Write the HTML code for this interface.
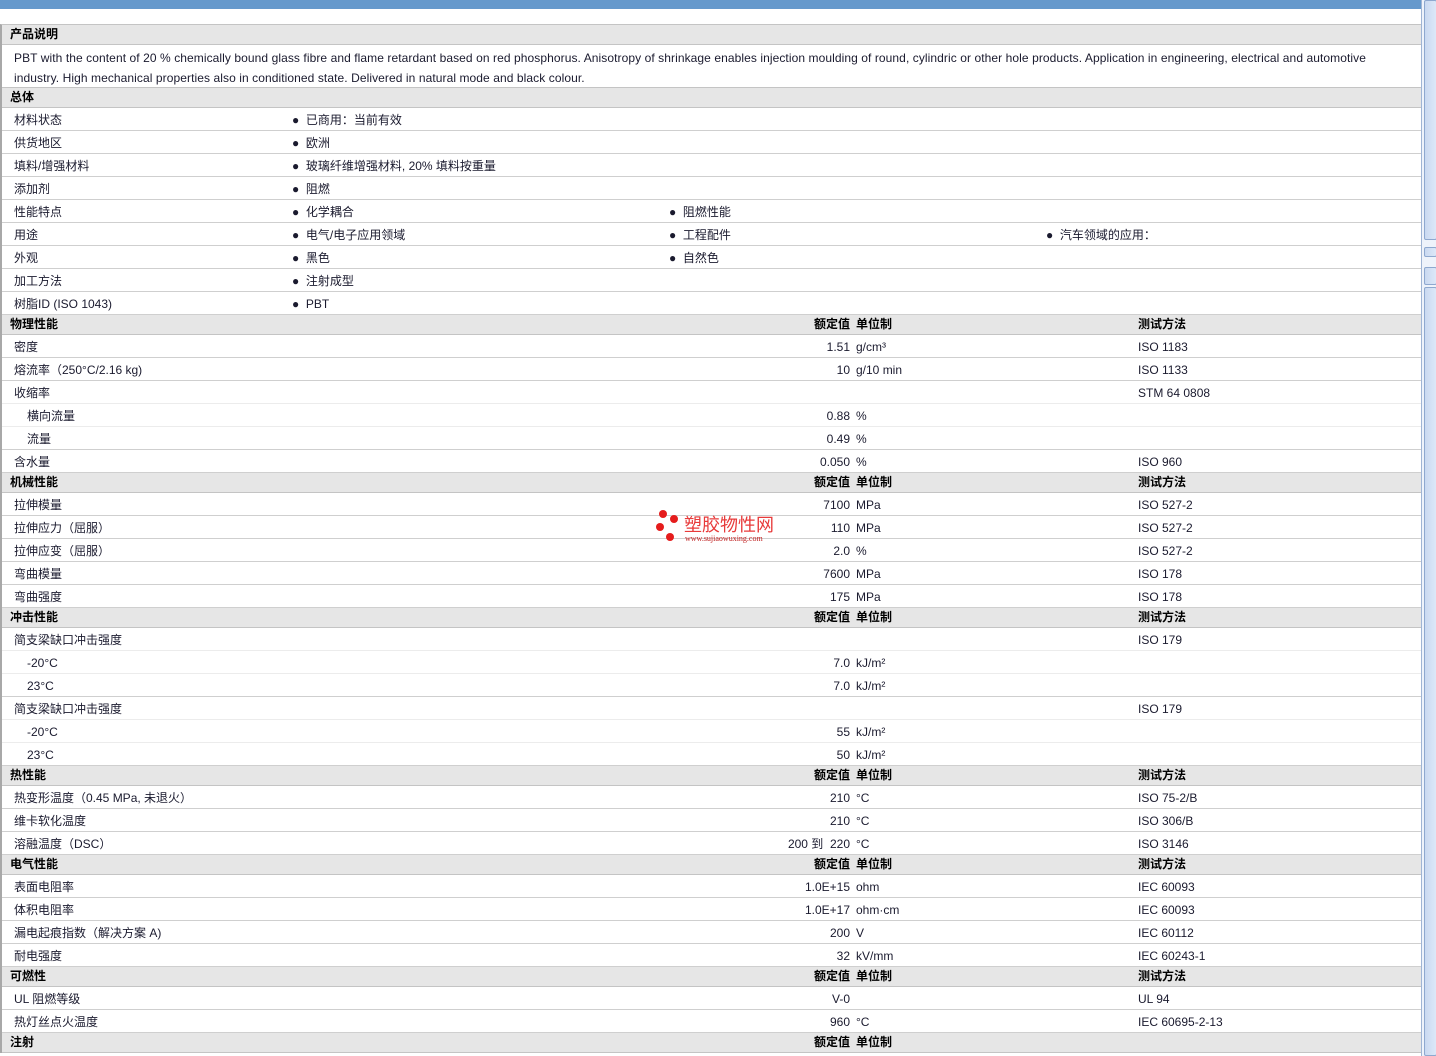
<!DOCTYPE html>
<html><head><meta charset="utf-8"><style>
*{margin:0;padding:0;box-sizing:border-box}
body{width:1436px;height:1056px;overflow:hidden;background:#fff;font-family:"Liberation Sans","Noto Sans CJK SC",sans-serif;font-size:12px;color:#1a1a2e;position:relative}
#top{position:absolute;left:0;top:0;width:1421px;height:9px;background:#6699cc}
#main{position:absolute;left:0;top:24px;width:1421px;border-left:2px solid #a8a8a8;border-top:1px solid #c4c4c4}
.h{height:20px;background:#e6e6e6;border-bottom:1px solid #c4c4c4;position:relative;font-weight:bold;color:#000;line-height:19px}
.h span{position:absolute;top:0}
.r{height:23px;border-bottom:1px solid #cfcfcf;position:relative;line-height:22px}
.r.s{border-bottom-color:#ececec}
.r span{position:absolute;top:1px;white-space:nowrap}
.l{left:12px}.l2{left:25px}
.v{right:571px;text-align:right}
.u{left:854px}.t{left:1136px}
.b1{left:290px}.b2{left:667px}.b3{left:1044px}
.hv{right:571px}.hu{left:854px}.ht{left:1136px}.hl{left:8px}
.desc{height:43px;padding:3px 12px 0;line-height:20px;color:#1a1a2e;position:relative;border-bottom:1px solid #c4c4c4;letter-spacing:0.08px;white-space:nowrap}
#sb{position:absolute;left:1421px;top:0;width:15px;height:1056px;background:#eef3fb;border-left:1px solid #9fb4d4}
.th{position:absolute;left:2px;width:13px;background:linear-gradient(90deg,#c9d9f1,#dde8f8);border:1px solid #8ea8cf;border-radius:2px}
</style></head><body>
<div id="top"></div>
<div id="main">
<div class="h"><span class="hl">产品说明</span></div>
<div class="desc">PBT with the content of 20 % chemically bound glass fibre and flame retardant based on red phosphorus. Anisotropy of shrinkage enables injection moulding of round, cylindric or other hole products. Application in engineering, electrical and automotive<br>industry. High mechanical properties also in conditioned state. Delivered in natural mode and black colour.</div>
<div class="h"><span class="hl">总体</span></div>
<div class="r"><span class="l">材料状态</span><span class="b1">●&nbsp;&nbsp;已商用：当前有效</span></div>
<div class="r"><span class="l">供货地区</span><span class="b1">●&nbsp;&nbsp;欧洲</span></div>
<div class="r"><span class="l">填料/增强材料</span><span class="b1">●&nbsp;&nbsp;玻璃纤维增强材料, 20% 填料按重量</span></div>
<div class="r"><span class="l">添加剂</span><span class="b1">●&nbsp;&nbsp;阻燃</span></div>
<div class="r"><span class="l">性能特点</span><span class="b1">●&nbsp;&nbsp;化学耦合</span><span class="b2">●&nbsp;&nbsp;阻燃性能</span></div>
<div class="r"><span class="l">用途</span><span class="b1">●&nbsp;&nbsp;电气/电子应用领域</span><span class="b2">●&nbsp;&nbsp;工程配件</span><span class="b3">●&nbsp;&nbsp;汽车领域的应用：</span></div>
<div class="r"><span class="l">外观</span><span class="b1">●&nbsp;&nbsp;黑色</span><span class="b2">●&nbsp;&nbsp;自然色</span></div>
<div class="r"><span class="l">加工方法</span><span class="b1">●&nbsp;&nbsp;注射成型</span></div>
<div class="r"><span class="l">树脂ID (ISO 1043)</span><span class="b1">●&nbsp;&nbsp;PBT</span></div>
<div class="h"><span class="hl">物理性能</span><span class="hv">额定值</span><span class="hu">单位制</span><span class="ht">测试方法</span></div>
<div class="r"><span class="l">密度</span><span class="v">1.51</span><span class="u">g/cm³</span><span class="t">ISO 1183</span></div>
<div class="r"><span class="l">熔流率（250°C/2.16 kg)</span><span class="v">10</span><span class="u">g/10 min</span><span class="t">ISO 1133</span></div>
<div class="r s"><span class="l">收缩率</span><span class="t">STM 64 0808</span></div>
<div class="r s"><span class="l2">横向流量</span><span class="v">0.88</span><span class="u">%</span></div>
<div class="r"><span class="l2">流量</span><span class="v">0.49</span><span class="u">%</span></div>
<div class="r"><span class="l">含水量</span><span class="v">0.050</span><span class="u">%</span><span class="t">ISO 960</span></div>
<div class="h"><span class="hl">机械性能</span><span class="hv">额定值</span><span class="hu">单位制</span><span class="ht">测试方法</span></div>
<div class="r"><span class="l">拉伸模量</span><span class="v">7100</span><span class="u">MPa</span><span class="t">ISO 527-2</span></div>
<div class="r"><span class="l">拉伸应力（屈服）</span><span class="v">110</span><span class="u">MPa</span><span class="t">ISO 527-2</span></div>
<div class="r"><span class="l">拉伸应变（屈服）</span><span class="v">2.0</span><span class="u">%</span><span class="t">ISO 527-2</span></div>
<div class="r"><span class="l">弯曲模量</span><span class="v">7600</span><span class="u">MPa</span><span class="t">ISO 178</span></div>
<div class="r"><span class="l">弯曲强度</span><span class="v">175</span><span class="u">MPa</span><span class="t">ISO 178</span></div>
<div class="h"><span class="hl">冲击性能</span><span class="hv">额定值</span><span class="hu">单位制</span><span class="ht">测试方法</span></div>
<div class="r s"><span class="l">简支梁缺口冲击强度</span><span class="t">ISO 179</span></div>
<div class="r s"><span class="l2">-20°C</span><span class="v">7.0</span><span class="u">kJ/m²</span></div>
<div class="r"><span class="l2">23°C</span><span class="v">7.0</span><span class="u">kJ/m²</span></div>
<div class="r s"><span class="l">简支梁缺口冲击强度</span><span class="t">ISO 179</span></div>
<div class="r s"><span class="l2">-20°C</span><span class="v">55</span><span class="u">kJ/m²</span></div>
<div class="r"><span class="l2">23°C</span><span class="v">50</span><span class="u">kJ/m²</span></div>
<div class="h"><span class="hl">热性能</span><span class="hv">额定值</span><span class="hu">单位制</span><span class="ht">测试方法</span></div>
<div class="r"><span class="l">热变形温度（0.45 MPa, 未退火）</span><span class="v">210</span><span class="u">°C</span><span class="t">ISO 75-2/B</span></div>
<div class="r"><span class="l">维卡软化温度</span><span class="v">210</span><span class="u">°C</span><span class="t">ISO 306/B</span></div>
<div class="r"><span class="l">溶融温度（DSC）</span><span class="v">200 到&nbsp;&nbsp;220</span><span class="u">°C</span><span class="t">ISO 3146</span></div>
<div class="h"><span class="hl">电气性能</span><span class="hv">额定值</span><span class="hu">单位制</span><span class="ht">测试方法</span></div>
<div class="r"><span class="l">表面电阻率</span><span class="v">1.0E+15</span><span class="u">ohm</span><span class="t">IEC 60093</span></div>
<div class="r"><span class="l">体积电阻率</span><span class="v">1.0E+17</span><span class="u">ohm·cm</span><span class="t">IEC 60093</span></div>
<div class="r"><span class="l">漏电起痕指数（解决方案 A)</span><span class="v">200</span><span class="u">V</span><span class="t">IEC 60112</span></div>
<div class="r"><span class="l">耐电强度</span><span class="v">32</span><span class="u">kV/mm</span><span class="t">IEC 60243-1</span></div>
<div class="h"><span class="hl">可燃性</span><span class="hv">额定值</span><span class="hu">单位制</span><span class="ht">测试方法</span></div>
<div class="r"><span class="l">UL 阻燃等级</span><span class="v">V-0</span><span class="t">UL 94</span></div>
<div class="r"><span class="l">热灯丝点火温度</span><span class="v">960</span><span class="u">°C</span><span class="t">IEC 60695-2-13</span></div>
<div class="h"><span class="hl">注射</span><span class="hv">额定值</span><span class="hu">单位制</span></div>
</div>
<svg style="position:absolute;left:652px;top:508px" width="140" height="40">
<circle cx="11" cy="6" r="4" fill="#e51c1c"/><circle cx="22" cy="11" r="4" fill="#e51c1c"/><circle cx="8" cy="19" r="4" fill="#e51c1c"/><circle cx="18" cy="29" r="4" fill="#e51c1c"/>
<text x="32" y="23" font-size="18" fill="#e83a3a" font-family="Noto Sans CJK SC,sans-serif">塑胶物性网</text>
<text x="33" y="33" font-size="8" fill="#c02020" font-family="Liberation Serif,serif">www.sujiaowuxing.com</text>
</svg>
<div id="sb">
<div class="th" style="top:0;height:240px"></div>
<div class="th" style="top:247px;height:10px"></div>
<div class="th" style="top:267px;height:18px"></div>
<div class="th" style="top:287px;height:769px"></div>
</div>
</body></html>
